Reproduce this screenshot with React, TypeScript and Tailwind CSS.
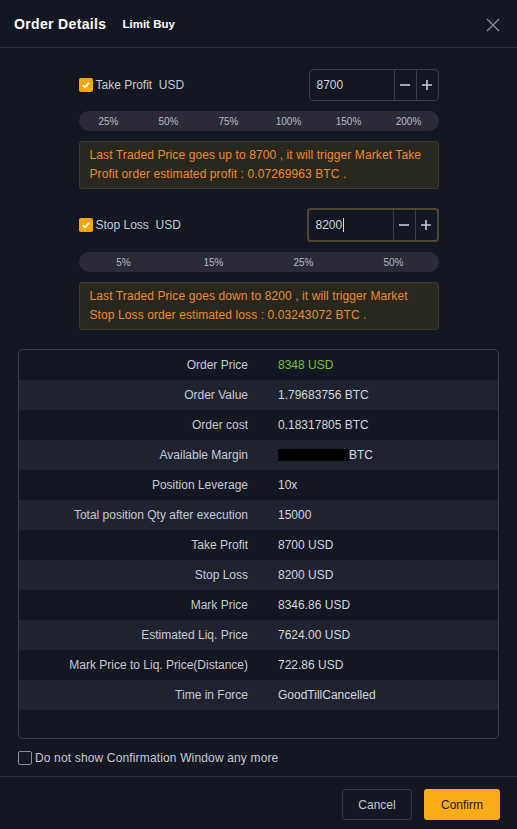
import React from "react";

const rows: { label: string; value: React.ReactNode; green?: boolean }[] = [
  { label: "Order Price", value: "8348 USD", green: true },
  { label: "Order Value", value: "1.79683756 BTC" },
  { label: "Order cost", value: "0.18317805 BTC" },
  {
    label: "Available Margin",
    value: (
      <span className="flex items-center">
        <span className="inline-block h-[12px] w-[71px] bg-black" />
        BTC
      </span>
    ),
  },
  { label: "Position Leverage", value: "10x" },
  { label: "Total position Qty after execution", value: "15000" },
  { label: "Take Profit", value: "8700 USD" },
  { label: "Stop Loss", value: "8200 USD" },
  { label: "Mark Price", value: "8346.86 USD" },
  { label: "Estimated Liq. Price", value: "7624.00 USD" },
  { label: "Mark Price to Liq. Price(Distance)", value: "722.86 USD" },
  { label: "Time in Force", value: "GoodTillCancelled" },
];

const Check = () => (
  <span className="flex h-[14px] w-[14px] items-center justify-center rounded-[2px] bg-[#f7a600]">
    <svg width="10" height="10" viewBox="0 0 10 10">
      <path d="M1.8 5.2 L4 7.3 L8.3 2.6" stroke="white" strokeWidth="1.8" fill="none" />
    </svg>
  </span>
);

const Stepper = ({ value, focused }: { value: string; focused?: boolean }) => (
  <div
    className={
      focused
        ? "flex h-[34px] w-[132px] rounded-[4px] border-2 border-[#4f4531] bg-[#131722]"
        : "flex h-[32px] w-[130px] rounded-[4px] border border-[#3a3d48] bg-[#131722]"
    }
  >
    <div className="flex flex-1 items-center pl-[7px] text-[12px] text-[#d3d7df]">
      {value}
      {focused && <span className="ml-px h-[14px] w-px bg-[#d3d7df]" />}
    </div>
    <div className="flex w-[22px] items-center justify-center border-l border-[#3a3d48] text-[#c8ccd4]">
      <svg width="10" height="10" viewBox="0 0 10 10">
        <path d="M0 5 H10" stroke="currentColor" strokeWidth="1.6" />
      </svg>
    </div>
    <div className="flex w-[22px] items-center justify-center border-l border-[#3a3d48] text-[#c8ccd4]">
      <svg width="10" height="10" viewBox="0 0 10 10">
        <path d="M0 5 H10 M5 0 V10" stroke="currentColor" strokeWidth="1.6" />
      </svg>
    </div>
  </div>
);

const Section = ({
  label,
  value,
  focused,
  percents,
  cols,
  text,
}: {
  label: string;
  value: string;
  focused?: boolean;
  percents: string[];
  cols: string;
  text: React.ReactNode;
}) => (
  <div className="mx-auto w-[360px]">
    <div className="flex items-center justify-between">
      <div className="flex items-center gap-[3px] text-[12px] text-[#c8ccd4]">
        <Check />
        <span className="whitespace-pre">{label}  USD</span>
      </div>
      <Stepper value={value} focused={focused} />
    </div>
    <div className={`mt-[10px] grid h-[20px] items-center rounded-full bg-[#2a2b37] text-center text-[10px] text-[#b6bac4] ${cols}`}>
      {percents.map((p) => (
        <span key={p}>{p}</span>
      ))}
    </div>
    <div className="mt-[10px] rounded-[3px] border border-[#3b3a2f] bg-[#28281f] px-[10px] py-[4px] text-[12px] leading-[19px] tracking-[0.1px] text-[#f0892b]">
      {text}
    </div>
  </div>
);

const App = () => {
  return (
    <div className="flex h-[829px] w-[517px] flex-col bg-[#131722] font-['Liberation_Sans',Arial,sans-serif]">
      <div className="flex h-[48px] items-center border-b border-[#2e3039] px-[14px] pt-[2px]">
        <span className="text-[14px] font-bold tracking-[0.35px] text-white">Order Details</span>
        <span className="ml-[16px] text-[11.5px] font-bold text-white">Limit Buy</span>
        <svg className="ml-auto mr-[3px]" width="14" height="14" viewBox="0 0 14 14">
          <path d="M1 1 L13 13 M13 1 L1 13" stroke="#8a8e98" strokeWidth="1.3" />
        </svg>
      </div>

      <div className="pt-[21px]">
        <Section
          label="Take Profit"
          value="8700"
          percents={["25%", "50%", "75%", "100%", "150%", "200%"]}
          cols="grid-cols-6"
          text="Last Traded Price goes up to 8700 , it will trigger Market Take Profit order estimated profit : 0.07269963 BTC ."
        />
        <div className="mt-[19px]">
          <Section
            label="Stop Loss"
            value="8200"
            focused
            percents={["5%", "15%", "25%", "50%"]}
            cols="grid-cols-4"
            text={
              <>
                Last Traded Price goes down to 8200 , it will trigger Market
                <br />
                Stop Loss order estimated loss : 0.03243072 BTC .
              </>
            }
          />
        </div>
      </div>

      <div className="mx-[18px] mt-[19px] h-[390px] rounded-[4px] border border-[#393c47] text-[12px]">
        {rows.map((r, i) => (
          <div
            key={r.label}
            className={`grid h-[30px] grid-cols-[229px_1fr] items-center gap-x-[30px] ${i % 2 === 1 ? "bg-[#1f2330]" : ""}`}
          >
            <span className="text-right text-[#c6cad3]">{r.label}</span>
            <span className={r.green ? "text-[#6fc23f]" : "text-[#d2d6de]"}>{r.value}</span>
          </div>
        ))}
      </div>

      <div className="flex h-[38px] items-center gap-[3px] border-b border-[#2e3039] px-[18px] text-[12px] tracking-[0.15px] text-[#c6cad3]">
        <span className="h-[14px] w-[14px] rounded-[2px] border border-[#8a8e98]" />
        Do not show Confirmation Window any more
      </div>

      <div className="flex flex-1 items-start justify-end gap-[12px] pr-[17px] pt-[12px] text-[12px]">
        <button className="h-[31px] w-[70px] rounded-[3px] border border-[#363945] text-[#c6cad3]">
          Cancel
        </button>
        <button className="h-[31px] w-[76px] rounded-[3px] bg-[#f8ad18] text-[#1a1a1a]">
          Confirm
        </button>
      </div>
    </div>
  );
};

export default App;
